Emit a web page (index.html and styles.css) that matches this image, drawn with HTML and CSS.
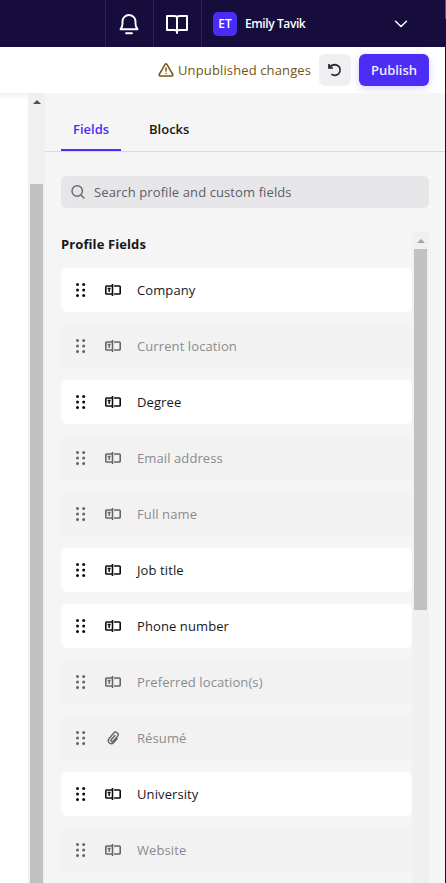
FILE: index.html
```html
<!DOCTYPE html>
<html lang="en">
<head>
<meta charset="utf-8">
<title>Fields</title>
<link rel="stylesheet" href="styles.css">
</head>
<body>
<svg class="defs" aria-hidden="true">
  <symbol id="grip" viewBox="0 0 12 16"><g fill="currentColor"><circle cx="2.500" cy="2.500" r="1.500"/><circle cx="8.700" cy="2.500" r="1.500"/><circle cx="2.500" cy="8" r="1.500"/><circle cx="8.700" cy="8" r="1.500"/><circle cx="2.500" cy="13.500" r="1.500"/><circle cx="8.700" cy="13.500" r="1.500"/></g></symbol>
  <symbol id="input" viewBox="0 0 16 12"><g fill="none" stroke="currentColor" stroke-width="1.600"><path d="M7 2H1.600Q.8 2 .8 2.800V9.200Q.8 10 1.600 10H7"/><path d="M9 2H14.400Q15.200 2 15.200 2.800V9.200Q15.200 10 14.400 10H9"/><path d="M7.500 0V12" stroke-width="1.600"/><path d="M2.600 4.500H5.600M4.200 4.500V8" stroke-width="1.500"/></g></symbol>
  <symbol id="clip" viewBox="0 0 16 16"><path d="M11.500 8.500 7.900 12.700A3 3 0 0 1 3.200 9L8 3.200A2.500 2.500 0 0 1 12 6.200L7.500 11.200A1.200 1.200 0 0 1 5.600 9.700L9.300 5.500" transform="translate(.6 0)" fill="none" stroke="currentColor" stroke-width="1.400" stroke-linecap="round" stroke-linejoin="round"/></symbol>
</svg>
<div class="app">
  <header class="topbar">
    <div class="cell"><svg width="22" height="22" viewBox="0 0 22 22" fill="none" stroke="#fff" stroke-width="1.900" stroke-linejoin="round" stroke-linecap="round"><path d="M2.500 16.200h17c-1.600-1.700-2-3-2-5.500V8.500a6.500 6.500 0 0 0-13 0v2.200c0 2.500-.4 3.800-2 5.500zM8 20.200h6"/></svg></div>
    <div class="cell"><svg width="24" height="22" viewBox="0 0 24 22" fill="none" stroke="#fff" stroke-width="2" stroke-linejoin="round" stroke-linecap="round"><path d="M12 5v15M12 5Q12 3 9.500 3H2v14h7.500Q12 17 12 19M12 5Q12 3 14.500 3H22v14h-7.500Q12 17 12 19"/></svg></div>
    <div class="user"><span class="avatar">ET</span><span class="name">Emily Tavik</span><svg class="chev" width="14" height="8" viewBox="0 0 14 8" fill="none" stroke="#fff" stroke-width="1.500" stroke-linecap="round" stroke-linejoin="round"><path d="M1.500 1.300 7 6.500l5.500-5.200"/></svg></div>
  </header>
  <div class="toolbar">
    <svg width="16" height="14" viewBox="0 0 16 14" fill="none" stroke="#755410" stroke-width="1.500" stroke-linejoin="round" stroke-linecap="round"><path d="M7.200 1.200Q8 .4 8.800 1.200L14.800 11.500Q15 13 13.800 13H2.200Q1 13 1.200 11.500zM8 5v3M8 10.400v.2"/></svg>
    <span class="status">Unpublished changes</span>
    <button class="undo"><svg width="16" height="16" viewBox="0 0 16 16" fill="none" stroke="#27272a" stroke-width="1.700"><path d="M2.200 5.600C3.800 3.600 6 2.600 8.300 2.600A5.400 5.400 0 1 1 4.400 12.200"/><path d="M2 2V6H6"/></svg></button>
    <button class="publish">Publish</button>
  </div>
  <div class="main">
    <div class="canvas"></div>
    <div class="scroll outer"><i class="arrow"></i><i class="thumb"></i></div>
    <aside class="panel">
      <nav class="tabs"><span class="tab active">Fields</span><span class="tab">Blocks</span></nav>
      <div class="search"><svg width="16" height="16" viewBox="0 0 16 16" fill="none" stroke="#6b6b76" stroke-width="1.500" stroke-linecap="round"><circle cx="7.200" cy="7" r="5.200"/><path d="m11 11 3 3"/></svg><span>Search profile and custom fields</span></div>
      <div class="listwrap">
        <div class="list">
          <h2>Profile Fields</h2>
          <div class="row"><svg class="grip"><use href="#grip"/></svg><svg class="input"><use href="#input"/></svg><span>Company</span></div>
          <div class="row off"><svg class="grip"><use href="#grip"/></svg><svg class="input"><use href="#input"/></svg><span>Current location</span></div>
          <div class="row"><svg class="grip"><use href="#grip"/></svg><svg class="input"><use href="#input"/></svg><span>Degree</span></div>
          <div class="row off"><svg class="grip"><use href="#grip"/></svg><svg class="input"><use href="#input"/></svg><span>Email address</span></div>
          <div class="row off"><svg class="grip"><use href="#grip"/></svg><svg class="input"><use href="#input"/></svg><span>Full name</span></div>
          <div class="row"><svg class="grip"><use href="#grip"/></svg><svg class="input"><use href="#input"/></svg><span>Job title</span></div>
          <div class="row"><svg class="grip"><use href="#grip"/></svg><svg class="input"><use href="#input"/></svg><span>Phone number</span></div>
          <div class="row off"><svg class="grip"><use href="#grip"/></svg><svg class="input"><use href="#input"/></svg><span>Preferred location(s)</span></div>
          <div class="row off"><svg class="grip"><use href="#grip"/></svg><svg class="clip"><use href="#clip"/></svg><span>Résumé</span></div>
          <div class="row"><svg class="grip"><use href="#grip"/></svg><svg class="input"><use href="#input"/></svg><span>University</span></div>
          <div class="row off"><svg class="grip"><use href="#grip"/></svg><svg class="input"><use href="#input"/></svg><span>Website</span></div>
        </div>
        <div class="scroll inner"><i class="arrow"></i><i class="thumb"></i></div>
      </div>
    </aside>
  </div>
</div>
</body>
</html>
```

FILE: styles.css
```css
* { box-sizing: border-box; }
body { margin: 0; font: 13px/20px "Open Sans", "Noto Sans", sans-serif; color: #18181b; background: #fff; }
svg { display: block; flex: none; }
.defs { position: absolute; width: 0; height: 0; }
.app { width: 446px; height: 883px; overflow: hidden; display: flex; flex-direction: column; padding-right: 1px; background: linear-gradient(#8b405c 19px, #100b6b 19px); }
.topbar { height: 47px; flex: none; display: flex; justify-content: flex-end; background: #160d3d; color: #fff; }
.cell { width: 48px; border-left: 1px solid #2b2350; display: flex; align-items: center; justify-content: center; padding-right: 2px; }
.user { width: 244px; border-left: 1px solid #2b2350; display: flex; align-items: center; padding: 0 37px 0 11px; }
.avatar { width: 24px; height: 24px; border-radius: 5px; background: #492cf5; font-size: 12px; font-weight: 600; line-height: 24px; text-align: center; }
.name { margin-left: 8px; font-size: 12px; font-weight: 600; letter-spacing: -0.4px; }
.chev { margin-left: auto; }
.toolbar { height: 46px; flex: none; display: flex; align-items: center; justify-content: flex-end; padding-right: 16px; position: relative; background: #fff; }
.status { margin-left: 4px; width: 133px; white-space: nowrap; color: #755410; letter-spacing: 0.13px; }
button { height: 32px; border: 0; border-radius: 6px; padding: 0; font: inherit; }
.undo { width: 32px; margin-left: 8px; background: #f0f0f2; display: flex; align-items: center; justify-content: center; }
.publish { width: 70px; margin-left: 8px; background: #4b2df6; color: #eeeaff; font-weight: 600; box-shadow: 0 2px 8px rgba(75, 45, 246, .22); }
.main { flex: 1; min-height: 0; display: flex; background: #f5f5f5; position: relative; }
.canvas { width: 28px; background: linear-gradient(#f2f2f2, #fff 7px); }
.scroll { width: 17px; flex: none; background: #f0f0f0; display: flex; flex-direction: column; align-items: center; }
.arrow { width: 0; height: 0; border: 4px solid transparent; border-top: 0; border-bottom-color: #505050; margin-top: 7px; }
.thumb { width: 13px; background: #c1c1c1; }
.outer .thumb { margin-top: 80px; flex: 1; }
.inner .arrow { border-bottom-color: #a3a3a3; margin-top: 7px; }
.inner .thumb { margin-top: 6px; height: 361px; }
.panel { flex: 1; display: flex; flex-direction: column; min-height: 0; }
.tabs { height: 59px; flex: none; border-bottom: 1px solid #dadadb; display: flex; gap: 16px; padding: 16px 16px 0; }
.tab { height: 42px; padding: 10px 12px 0; font-weight: 600; }
.active { width: 60px; color: #4b2df6; border-bottom: 2px solid #4b2df6; }
.search { height: 32px; flex: none; margin: 24px 16px; padding: 0 9px; display: flex; align-items: center; gap: 8px; background: #e6e6e8; border-radius: 6px; color: #5d5d66; letter-spacing: 0.1px; }
.listwrap { flex: 1; min-height: 0; padding: 0 16px; display: flex; }
.list { flex: 1; overflow: hidden; }
h2 { margin: 2px 0 14px; font-size: 13px; line-height: 20px; font-weight: 700; letter-spacing: 0.1px; }
.row { height: 44px; margin-bottom: 12px; display: flex; align-items: center; padding-left: 14px; background: #fff; border-radius: 6px; letter-spacing: 0.1px; }
.off { background: #f2f2f2; color: #8b8b8d; }
.row svg { color: #0c0c0e; }
.off svg { color: #656567; }
.grip { width: 12px; height: 16px; margin-right: 18px; }
.input, .clip { width: 16px; height: 12px; margin-right: 16px; }
.clip { height: 16px; }
```
